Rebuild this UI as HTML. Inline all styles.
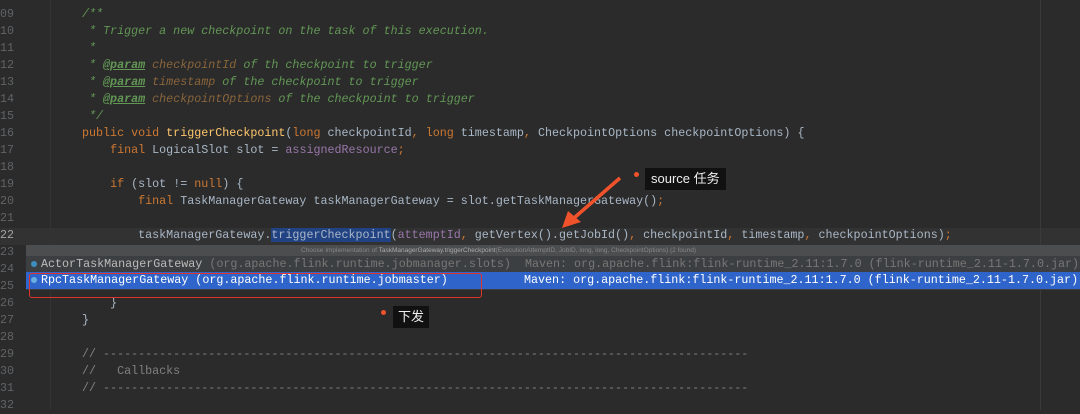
<!DOCTYPE html>
<html><head><meta charset="utf-8"><style>
body{margin:0;width:1080px;height:410px;background:#2b2b2b;overflow:hidden;position:relative;font-family:"Liberation Mono",monospace;font-size:11.7px;}
.ln{position:absolute;left:0;width:14px;text-align:right;color:#606366;height:17px;line-height:17px;}
.c{position:absolute;left:82px;white-space:pre;color:#a9b7c6;height:17px;line-height:17px;}
.cm{color:#629755;font-style:italic}
.tg{color:#629755;font-style:italic;font-weight:bold;text-decoration:underline}
.pn{color:#8a653b;font-style:italic}
.k{color:#cc7832}
.m{color:#ffc66d}
.p{color:#9876aa}
.tip{position:absolute;background:#111;color:#eee;font-family:"Liberation Sans","Noto Sans CJK SC",sans-serif;font-size:13px;line-height:22px;padding:0 6px;}
.dot{position:absolute;width:5px;height:5px;border-radius:50%;background:#f0522b}
</style></head><body>
<div style="position:absolute;left:0;top:228px;width:1080px;height:17px;background:#323232"></div>
<div style="position:absolute;left:1040px;top:0;width:1px;height:410px;background:#3a3a3a"></div>
<div style="position:absolute;left:50px;top:0;width:1px;height:410px;background:#333"></div>

<div class="ln" style="top:-11px">08</div>
<div class="ln" style="top:6px">09</div><div class="c" style="top:6px"><span class="cm">/**</span></div>
<div class="ln" style="top:23px">10</div><div class="c" style="top:23px"><span class="cm"> * Trigger a new checkpoint on the task of this execution.</span></div>
<div class="ln" style="top:40px">11</div><div class="c" style="top:40px"><span class="cm"> *</span></div>
<div class="ln" style="top:57px">12</div><div class="c" style="top:57px"><span class="cm"> * </span><span class="tg">@param</span> <span class="pn">checkpointId</span><span class="cm"> of th checkpoint to trigger</span></div>
<div class="ln" style="top:74px">13</div><div class="c" style="top:74px"><span class="cm"> * </span><span class="tg">@param</span> <span class="pn">timestamp</span><span class="cm"> of the checkpoint to trigger</span></div>
<div class="ln" style="top:91px">14</div><div class="c" style="top:91px"><span class="cm"> * </span><span class="tg">@param</span> <span class="pn">checkpointOptions</span><span class="cm"> of the checkpoint to trigger</span></div>
<div class="ln" style="top:108px">15</div><div class="c" style="top:108px"><span class="cm"> */</span></div>
<div class="ln" style="top:125px">16</div><div class="c" style="top:125px"><span class="k">public void </span><span class="m">triggerCheckpoint</span>(<span class="k">long </span>checkpointId<span class="k">, long </span>timestamp<span class="k">, </span>CheckpointOptions checkpointOptions) {</div>
<div class="ln" style="top:142px">17</div><div class="c" style="top:142px">    <span class="k">final </span>LogicalSlot slot = <span class="p">assignedResource</span><span class="k">;</span></div>
<div class="ln" style="top:159px">18</div>
<div class="ln" style="top:176px">19</div><div class="c" style="top:176px">    <span class="k">if </span>(slot != <span class="k">null</span>) {</div>
<div class="ln" style="top:193px">20</div><div class="c" style="top:193px">        <span class="k">final </span>TaskManagerGateway taskManagerGateway = slot.getTaskManagerGateway()<span class="k">;</span></div>
<div class="ln" style="top:210px">21</div>
<div class="ln" style="top:227px;color:#a4a3a3">22</div><div class="c" style="top:227px">        taskManagerGateway.<span style="background:#214283">triggerCheckpoint</span>(<span class="p">attemptId</span><span class="k">, </span>getVertex().getJobId()<span class="k">, </span>checkpointId<span class="k">, </span>timestamp<span class="k">, </span>checkpointOptions)<span class="k">;</span></div>
<div class="ln" style="top:244px">23</div>
<div class="ln" style="top:261px">24</div>
<div class="ln" style="top:278px">25</div>
<div class="ln" style="top:295px">26</div><div class="c" style="top:295px">    }</div>
<div class="ln" style="top:312px">27</div><div class="c" style="top:312px">}</div>
<div class="ln" style="top:329px">28</div>
<div class="ln" style="top:346px">29</div><div class="c" style="top:346px;color:#808080">// --------------------------------------------------------------------------------------------</div>
<div class="ln" style="top:363px">30</div><div class="c" style="top:363px;color:#808080">//   Callbacks</div>
<div class="ln" style="top:380px">31</div><div class="c" style="top:380px;color:#808080">// --------------------------------------------------------------------------------------------</div>
<div class="ln" style="top:397px">32</div>

<div style="position:absolute;left:26px;top:245px;width:1054px;height:45px;background:#3c3f41"></div>
<div style="position:absolute;left:26px;top:245px;width:1054px;height:11px;background:#4b4d4f;color:#888;font-family:'Liberation Sans',sans-serif;font-size:6.5px;line-height:11px;white-space:pre"><span style="position:absolute;left:275px">Choose Implementation of <span style="color:#aaa">TaskManagerGateway.triggerCheckpoint</span>(ExecutionAttemptID, JobID, long, long, CheckpointOptions) (2 found)</span></div>
<div style="position:absolute;left:26px;top:256px;width:1054px;height:16px;line-height:16px;white-space:pre;color:#bbb"><span style="position:absolute;left:5px;top:5px;width:6px;height:6px;border-radius:50%;background:#3e8fc0"></span><span style="position:absolute;left:15px">ActorTaskManagerGateway <span style="color:#777">(org.apache.flink.runtime.jobmanager.slots)  Maven: org.apache.flink:flink-runtime_2.11:1.7.0 (flink-runtime_2.11-1.7.0.jar)</span></span></div>
<div style="position:absolute;left:26px;top:272px;width:1054px;height:17px;line-height:17px;white-space:pre;color:#fff;background:#2f65ca"><span style="position:absolute;left:5px;top:5px;width:6px;height:6px;border-radius:50%;background:#6aaee0"></span><span style="position:absolute;left:15px">RpcTaskManagerGateway (org.apache.flink.runtime.jobmaster)</span><span style="position:absolute;left:498px">Maven: org.apache.flink:flink-runtime_2.11:1.7.0 (flink-runtime_2.11-1.7.0.jar)</span></div>
<div style="position:absolute;left:29px;top:273px;width:451px;height:23px;border:1.5px solid #e0342a;border-radius:3px"></div>

<div class="dot" style="left:634px;top:172px"></div>
<div class="tip" style="left:645px;top:168px">source 任务</div>
<div class="dot" style="left:381px;top:310px"></div>
<div class="tip" style="left:393px;top:306px;padding:0 5px">下发</div>
<svg style="position:absolute;left:0;top:0" width="1080" height="410"><line x1="620" y1="178" x2="574" y2="218" stroke="#f0522b" stroke-width="3.5"/><polygon points="562,228 568,211 581,222" fill="#f0522b"/></svg>
</body></html>
